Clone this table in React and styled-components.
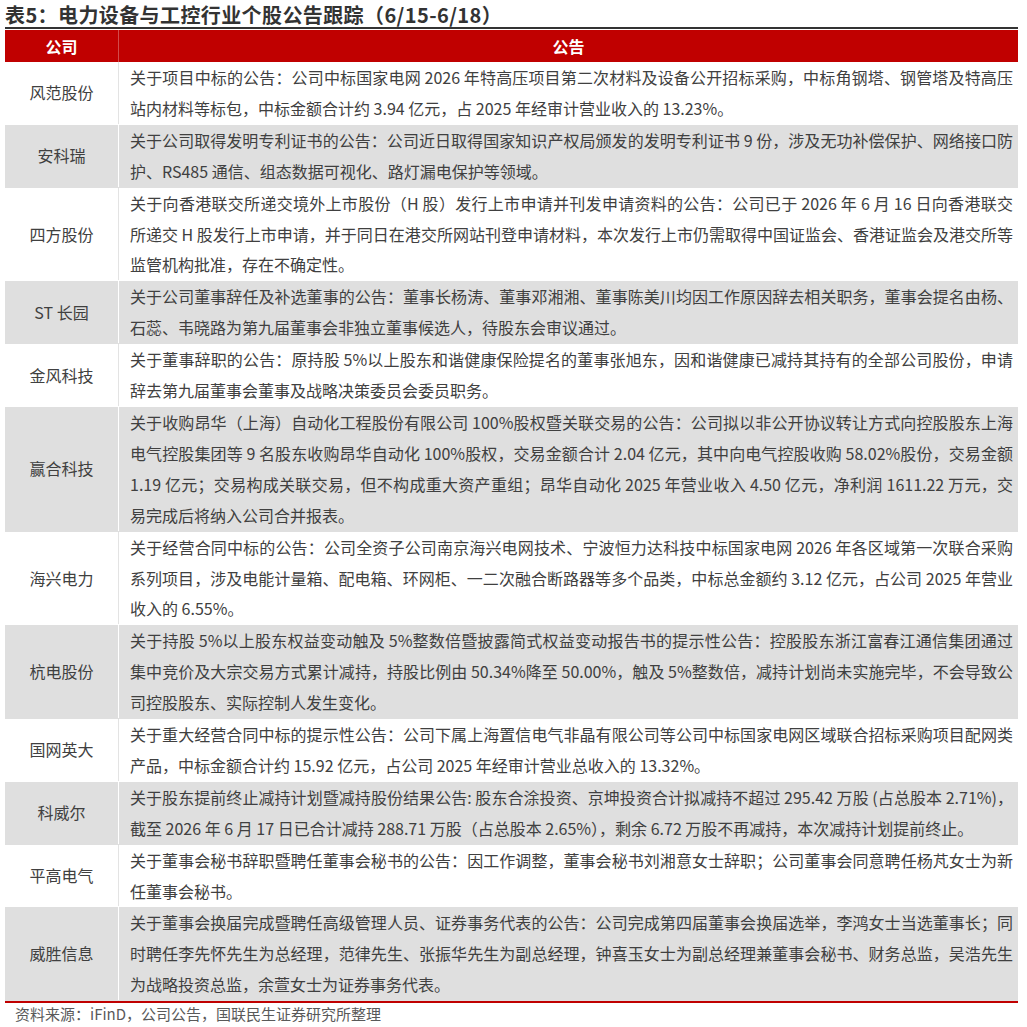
import React from "react";
import styled, { createGlobalStyle } from "styled-components";

const GlobalStyle = createGlobalStyle`
    body {
        margin: 0;
        background: #ffffff;
        font-family: "Noto Sans CJK SC", "Noto Sans", sans-serif;
    }
`;

const rows = [
    {
        name: "风范股份",
        lines: [
            "关于项目中标的公告：公司中标国家电网 2026 年特高压项目第二次材料及设备公开招标采购，中标角钢塔、钢管塔及特高压",
            "站内材料等标包，中标金额合计约 3.94 亿元，占 2025 年经审计营业收入的 13.23%。",
        ],
    },
    {
        name: "安科瑞",
        lines: [
            "关于公司取得发明专利证书的公告：公司近日取得国家知识产权局颁发的发明专利证书 9 份，涉及无功补偿保护、网络接口防",
            "护、RS485 通信、组态数据可视化、路灯漏电保护等领域。",
        ],
    },
    {
        name: "四方股份",
        lines: [
            "关于向香港联交所递交境外上市股份（H 股）发行上市申请并刊发申请资料的公告：公司已于 2026 年 6 月 16 日向香港联交",
            "所递交 H 股发行上市申请，并于同日在港交所网站刊登申请材料，本次发行上市仍需取得中国证监会、香港证监会及港交所等",
            "监管机构批准，存在不确定性。",
        ],
    },
    {
        name: "ST 长园",
        lines: [
            "关于公司董事辞任及补选董事的公告：董事长杨涛、董事邓湘湘、董事陈美川均因工作原因辞去相关职务，董事会提名由杨、",
            "石蕊、韦晓路为第九届董事会非独立董事候选人，待股东会审议通过。",
        ],
    },
    {
        name: "金风科技",
        lines: [
            "关于董事辞职的公告：原持股 5%以上股东和谐健康保险提名的董事张旭东，因和谐健康已减持其持有的全部公司股份，申请",
            "辞去第九届董事会董事及战略决策委员会委员职务。",
        ],
    },
    {
        name: "赢合科技",
        lines: [
            "关于收购昂华（上海）自动化工程股份有限公司 100%股权暨关联交易的公告：公司拟以非公开协议转让方式向控股股东上海",
            "电气控股集团等 9 名股东收购昂华自动化 100%股权，交易金额合计 2.04 亿元，其中向电气控股收购 58.02%股份，交易金额",
            "1.19 亿元；交易构成关联交易，但不构成重大资产重组；昂华自动化 2025 年营业收入 4.50 亿元，净利润 1611.22 万元，交",
            "易完成后将纳入公司合并报表。",
        ],
    },
    {
        name: "海兴电力",
        lines: [
            "关于经营合同中标的公告：公司全资子公司南京海兴电网技术、宁波恒力达科技中标国家电网 2026 年各区域第一次联合采购",
            "系列项目，涉及电能计量箱、配电箱、环网柜、一二次融合断路器等多个品类，中标总金额约 3.12 亿元，占公司 2025 年营业",
            "收入的 6.55%。",
        ],
    },
    {
        name: "杭电股份",
        lines: [
            "关于持股 5%以上股东权益变动触及 5%整数倍暨披露简式权益变动报告书的提示性公告：控股股东浙江富春江通信集团通过",
            "集中竞价及大宗交易方式累计减持，持股比例由 50.34%降至 50.00%，触及 5%整数倍，减持计划尚未实施完毕，不会导致公",
            "司控股股东、实际控制人发生变化。",
        ],
    },
    {
        name: "国网英大",
        lines: [
            "关于重大经营合同中标的提示性公告：公司下属上海置信电气非晶有限公司等公司中标国家电网区域联合招标采购项目配网类",
            "产品，中标金额合计约 15.92 亿元，占公司 2025 年经审计营业总收入的 13.32%。",
        ],
    },
    {
        name: "科威尔",
        lines: [
            "关于股东提前终止减持计划暨减持股份结果公告: 股东合涂投资、京坤投资合计拟减持不超过 295.42 万股 (占总股本 2.71%)，",
            "截至 2026 年 6 月 17 日已合计减持 288.71 万股（占总股本 2.65%），剩余 6.72 万股不再减持，本次减持计划提前终止。",
        ],
    },
    {
        name: "平高电气",
        lines: [
            "关于董事会秘书辞职暨聘任董事会秘书的公告：因工作调整，董事会秘书刘湘意女士辞职；公司董事会同意聘任杨芃女士为新",
            "任董事会秘书。",
        ],
    },
    {
        name: "威胜信息",
        lines: [
            "关于董事会换届完成暨聘任高级管理人员、证券事务代表的公告：公司完成第四届董事会换届选举，李鸿女士当选董事长；同",
            "时聘任李先怀先生为总经理，范律先生、张振华先生为副总经理，钟喜玉女士为副总经理兼董事会秘书、财务总监，吴浩先生",
            "为战略投资总监，余萱女士为证券事务代表。",
        ],
    },
];

const Page = styled.div`
    width: 1013px;
    padding: 3px 0 0 5px;
`;

const Title = styled.div`
    font-size: 20px;
    font-weight: 700;
    line-height: 24px;
    letter-spacing: 0.4px;
    color: #333333;
    white-space: nowrap;
`;

const Table = styled.div`
    border-top: 2px solid #333333;
    border-bottom: 2px solid #c00000;
    padding-top: 1px;
`;

const HeaderRow = styled.div`
    display: grid;
    grid-template-columns: 114px 1fr;
    height: 32px;
    background: #c00000;
`;

const HeaderCell = styled.div`
    display: flex;
    align-items: center;
    justify-content: center;
    color: #ffffff;
    font-size: 16px;
    font-weight: 700;
    border-right: ${(p) => (p.$divider ? "1px solid #d24a4a" : "none")};
`;

const Row = styled.div`
    display: grid;
    grid-template-columns: 114px 1fr;
    background: ${(p) => (p.$shade ? "#dfdfdf" : "#ffffff")};
    padding-bottom: 1px;
    color: #404040;
    font-size: 16px;
    line-height: 30.9px;
`;

const NameCell = styled.div`
    display: flex;
    align-items: center;
    justify-content: center;
    border-right: 1px solid ${(p) => (p.$shade ? "#ffffff" : "#e3e3e3")};
`;

const TextCell = styled.div`
    padding: 0 5px 0 11px;
`;

const Line = styled.div`
    text-align: justify;
    text-align-last: ${(p) => (p.$last ? "left" : "justify")};
`;

const Source = styled.div`
    padding: 1px 0 0 10px;
    font-size: 15px;
    line-height: 20px;
    color: #595959;
`;

const App = () => {
    return (
        <Page>
            <GlobalStyle />
            <Title>表5：电力设备与工控行业个股公告跟踪（6/15-6/18）</Title>
            <Table>
                <HeaderRow>
                    <HeaderCell $divider>公司</HeaderCell>
                    <HeaderCell>公告</HeaderCell>
                </HeaderRow>
                {rows.map((row, i) => {
                    const shade = i % 2 === 1;
                    return (
                        <Row key={row.name} $shade={shade}>
                            <NameCell $shade={shade}>{row.name}</NameCell>
                            <TextCell>
                                {row.lines.map((line, j) => (
                                    <Line key={j} $last={j === row.lines.length - 1}>
                                        {line}
                                    </Line>
                                ))}
                            </TextCell>
                        </Row>
                    );
                })}
            </Table>
            <Source>资料来源：iFinD，公司公告，国联民生证券研究所整理</Source>
        </Page>
    );
};

export default App;
